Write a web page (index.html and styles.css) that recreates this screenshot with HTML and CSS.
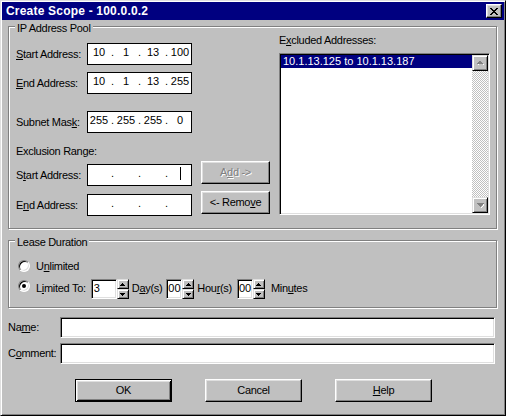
FILE: index.html
```html
<!DOCTYPE html>
<html>
<head>
<meta charset="utf-8">
<title>Create Scope</title>
<link rel="stylesheet" href="styles.css">
</head>
<body>
<div class="window">
  <div class="titlebar">
    <span class="title">Create Scope - 100.0.0.2</span>
    <span class="close"><svg width="8" height="7" viewBox="0 0 8 7" shape-rendering="crispEdges"><path d="M0 0h2v1H0zM6 0h2v1H6zM1 1h2v1H1zM5 1h2v1H5zM2 2h4v1H2zM3 3h2v1H3zM2 4h4v1H2zM1 5h2v1H1zM5 5h2v1H5zM0 6h2v1H0zM6 6h2v1H6z"/></svg></span>
  </div>
  <div class="client">
    <div class="group pool">
      <div class="group-title">IP Address Pool</div>
      <div class="pool-body">
        <div class="pool-left">
          <div class="row r1">
            <span class="lbl"><u>S</u>tart Address:</span>
            <div class="ip"><span class="oct">10</span><span class="dot">.</span><span class="oct">1</span><span class="dot">.</span><span class="oct">13</span><span class="dot">.</span><span class="oct">100</span></div>
          </div>
          <div class="row r2">
            <span class="lbl"><u>E</u>nd Address:</span>
            <div class="ip"><span class="oct">10</span><span class="dot">.</span><span class="oct">1</span><span class="dot">.</span><span class="oct">13</span><span class="dot">.</span><span class="oct">255</span></div>
          </div>
          <div class="row r3">
            <span class="lbl">Subnet Mas<u>k</u>:</span>
            <div class="ip"><span class="oct">255</span><span class="dot">.</span><span class="oct">255</span><span class="dot">.</span><span class="oct">255</span><span class="dot">.</span><span class="oct">0</span></div>
          </div>
          <div class="lbl excl-title">Exclusion Range:</div>
          <div class="excl">
            <span class="lbl">S<u>t</u>art Address:</span>
            <div class="ip"><span class="oct"></span><span class="dot">.</span><span class="oct"></span><span class="dot">.</span><span class="oct"></span><span class="dot">.</span><span class="oct"><span class="caret"></span></span></div>
            <div class="btn small disabled">A<u>d</u>d -&gt;</div>
            <span class="lbl">E<u>n</u>d Address:</span>
            <div class="ip"><span class="oct"></span><span class="dot">.</span><span class="oct"></span><span class="dot">.</span><span class="oct"></span><span class="dot">.</span><span class="oct"></span></div>
            <div class="btn small">&lt;- Remo<u>v</u>e</div>
          </div>
        </div>
        <div class="pool-right">
          <div class="lbl list-title">E<u>x</u>cluded Addresses:</div>
          <div class="list">
            <div class="items">
              <div class="item sel">10.1.13.125 to 10.1.13.187</div>
            </div>
            <div class="sb">
              <div class="sb-btn"><svg width="7" height="5" viewBox="0 0 7 5" shape-rendering="crispEdges"><path fill="#fff" d="M4 1h1v1h1v1h1v1H1V3h1v1h4V3H5V2H4z"/><path fill="#808080" d="M3 0h1v1h1v1h1v1H0V2h1V1h1V0z"/></svg></div>
              <div class="sb-track"></div>
              <div class="sb-btn"><svg width="7" height="5" viewBox="0 0 7 5" shape-rendering="crispEdges"><path fill="#fff" d="M1 1h7v1H7v1H6v1H5v1H4V4h1V3h1V2H1z"/><path fill="#808080" d="M0 0h7v1H6v1H5v1H4v1H3V3H2V2H1V1H0z"/></svg></div>
            </div>
          </div>
        </div>
      </div>
    </div>

    <div class="group lease">
      <div class="group-title">Lease Duration</div>
      <div class="lrow lrow1">
        <span class="radio"></span>
        <span class="lbl rlbl">U<u>n</u>limited</span>
      </div>
      <div class="lrow lrow2">
        <span class="radio on"></span>
        <span class="lbl rlbl lim">L<u>i</u>mited To:</span>
        <span class="spinbox w26">3</span>
        <span class="spin"><span class="spin-btn"><svg width="5" height="3" viewBox="0 0 5 3" shape-rendering="crispEdges"><path d="M2 0h1v1h1v1h1v1H0V2h1V1h1z"/></svg></span><span class="spin-btn"><svg width="5" height="3" viewBox="0 0 5 3" shape-rendering="crispEdges"><path d="M0 0h5v1H4v1H3v1H2V2H1V1H0z"/></svg></span></span>
        <span class="lbl unit u-day">D<u>a</u>y(s)</span>
        <span class="spinbox w16">00</span>
        <span class="spin"><span class="spin-btn"><svg width="5" height="3" viewBox="0 0 5 3" shape-rendering="crispEdges"><path d="M2 0h1v1h1v1h1v1H0V2h1V1h1z"/></svg></span><span class="spin-btn"><svg width="5" height="3" viewBox="0 0 5 3" shape-rendering="crispEdges"><path d="M0 0h5v1H4v1H3v1H2V2H1V1H0z"/></svg></span></span>
        <span class="lbl unit u-hour">Hou<u>r</u>(s)</span>
        <span class="spinbox w16">00</span>
        <span class="spin"><span class="spin-btn"><svg width="5" height="3" viewBox="0 0 5 3" shape-rendering="crispEdges"><path d="M2 0h1v1h1v1h1v1H0V2h1V1h1z"/></svg></span><span class="spin-btn"><svg width="5" height="3" viewBox="0 0 5 3" shape-rendering="crispEdges"><path d="M0 0h5v1H4v1H3v1H2V2H1V1H0z"/></svg></span></span>
        <span class="lbl unit u-min">Min<u>u</u>tes</span>
      </div>
    </div>

    <div class="frow name-row">
      <span class="lbl flbl">Na<u>m</u>e:</span>
      <div class="field"></div>
    </div>
    <div class="frow comment-row">
      <span class="lbl flbl">C<u>o</u>mment:</span>
      <div class="field"></div>
    </div>

    <div class="buttons">
      <div class="btn big default">OK</div>
      <div class="btn big">Cancel</div>
      <div class="btn big"><u>H</u>elp</div>
    </div>
  </div>
</div>
</body>
</html>
```

FILE: styles.css
```css
* { box-sizing: border-box; }
html, body { margin: 0; padding: 0; }
body {
  width: 506px;
  height: 416px;
  overflow: hidden;
  background: #c0c0c0;
  font-family: "Liberation Sans", Arial, sans-serif;
  font-size: 11px;
  color: #000;
}
u { text-decoration-thickness: 1px; text-underline-offset: 1px; }

.window {
  width: 506px;
  height: 416px;
  background: #c0c0c0;
  border: 1px solid;
  border-color: #dfdfdf #000 #000 #dfdfdf;
  box-shadow: inset 1px 1px 0 #fff, inset -1px -1px 0 #808080;
  padding: 1px;
}

.titlebar {
  height: 18px;
  background: #000080;
  color: #fff;
  display: flex;
  align-items: center;
  justify-content: space-between;
  padding: 0 2px 0 4px;
}
.title {
  font-weight: bold;
  font-size: 12px;
  letter-spacing: 0.2px;
  line-height: 18px;
  white-space: nowrap;
}
.close {
  width: 16px;
  height: 14px;
  background: #c0c0c0;
  border: 1px solid;
  border-color: #fff #000 #000 #fff;
  box-shadow: inset -1px -1px 0 #808080, inset 1px 1px 0 #dfdfdf;
  display: flex;
  align-items: center;
  justify-content: center;
  padding-right: 1px;
}
.close svg { display: block; fill: #000; }

.client { padding-left: 6px; }

.group {
  width: 489px;
  border: 1px solid #808080;
  box-shadow: inset 1px 1px 0 #fff, 1px 1px 0 #fff;
}
.group-title {
  width: max-content;
  margin: -5px 0 0 6px;
  padding: 0 2px;
  background: #c0c0c0;
  line-height: 13px;
  letter-spacing: -0.3px;
  white-space: nowrap;
}
.lbl {
  line-height: 13px;
  letter-spacing: -0.3px;
  white-space: nowrap;
}

.pool { margin-top: 6px; height: 203px; }
.pool-body { display: flex; }
.pool-left { width: 270px; padding-left: 7px; }
.pool-right { width: 211px; }

.row { display: flex; align-items: center; height: 22px; }
.row .lbl, .excl > .lbl { width: 71px; }
.r1 { margin-top: 8px; }
.r2 { margin-top: 7px; }
.r3 { margin-top: 17px; }
.excl-title { margin-top: 12px; }

.ip {
  width: 105px;
  height: 22px;
  border: 1px solid #000;
  background: #fff;
  display: flex;
  line-height: 17px;
}
.oct { width: 22px; text-align: center; display: flex; justify-content: center; }
.dot { width: 5px; text-align: center; }
.caret { display: block; width: 1px; height: 13px; background: #000; margin: 2px 0 0 1px; }

.excl {
  margin-top: 6px;
  display: grid;
  grid-template-columns: 71px 105px 78px;
  grid-template-rows: 22px 22px;
  row-gap: 8px;
  align-items: center;
}

.btn {
  background: #c0c0c0;
  border: 1px solid;
  border-color: #fff #000 #000 #fff;
  box-shadow: inset -1px -1px 0 #808080, inset 1px 1px 0 #dfdfdf;
  display: flex;
  align-items: center;
  justify-content: center;
  letter-spacing: -0.3px;
  white-space: nowrap;
  line-height: 13px;
}
.btn.small {
  width: 69px;
  height: 23px;
  margin: -3px 0 0 9px;
  align-self: start;
}
.btn.disabled { color: #808080; text-shadow: 1px 1px 0 #fff; }
.btn.big { width: 97px; height: 23px; }
.btn.default {
  border-color: #000;
  box-shadow: inset 1px 1px 0 #fff, inset -1px -1px 0 #000, inset 2px 2px 0 #dfdfdf, inset -2px -2px 0 #808080;
}

.list-title { margin-top: -1px; }
.list {
  margin-top: 6px;
  width: 211px;
  height: 162px;
  background: #fff;
  border: 1px solid;
  border-color: #808080 #fff #fff #808080;
  box-shadow: inset 1px 1px 0 #000, inset -1px -1px 0 #dfdfdf;
  padding: 1px;
  display: flex;
}
.items { flex: 1; }
.item { height: 13px; line-height: 13px; padding-left: 2px; white-space: nowrap; }
.item.sel { background: #000080; color: #fff; }
.sb {
  width: 16px;
  display: flex;
  flex-direction: column;
  background: repeating-conic-gradient(#c0c0c0 0 25%, #fff 0 50%) 0 0 / 2px 2px;
}
.sb-track { flex: 1; }
.sb-btn {
  width: 16px;
  height: 16px;
  background: #c0c0c0;
  border: 1px solid;
  border-color: #dfdfdf #000 #000 #dfdfdf;
  box-shadow: inset 1px 1px 0 #fff, inset -1px -1px 0 #808080;
  display: flex;
  align-items: center;
  justify-content: center;
}
.sb-btn svg { display: block; }

.lease { margin-top: 11px; height: 68px; }
.lrow { display: flex; margin-left: 9px; }
.lrow1 { margin-top: 11px; height: 12px; align-items: center; }
.lrow2 { margin-top: 7px; height: 20px; align-items: flex-start; }
.radio {
  width: 12px;
  height: 12px;
  border-radius: 50%;
  background: #fff;
  border: 1px solid;
  border-color: #808080 #fff #fff #808080;
  box-shadow: inset 1px 1px 0 #000, inset -1px -1px 0 #dfdfdf;
  display: flex;
  align-items: center;
  justify-content: center;
  flex: none;
}
.radio.on::after {
  content: "";
  width: 4px;
  height: 4px;
  border-radius: 50%;
  background: #000;
}
.lrow2 .radio { margin-top: 1px; }
.rlbl { margin-left: 6px; }
.lrow2 .lbl { margin-top: 3px; }
.lim { margin-right: 5px; }
.spinbox {
  height: 20px;
  background: #fff;
  border: 1px solid;
  border-color: #808080 #fff #fff #808080;
  box-shadow: inset 1px 1px 0 #000, inset -1px -1px 0 #dfdfdf;
  padding: 2px 0 0 2px;
  line-height: 13px;
}
.w26 { width: 26px; }
.w16 { width: 16px; padding-left: 1px; }
.spin { width: 12px; height: 20px; display: flex; flex-direction: column; }
.spin-btn {
  height: 10px;
  background: #c0c0c0;
  border: 1px solid;
  border-color: #dfdfdf #000 #000 #dfdfdf;
  box-shadow: inset 1px 1px 0 #fff, inset -1px -1px 0 #808080;
  display: flex;
  align-items: center;
  justify-content: center;
}
.spin-btn svg { display: block; }
.u-day { margin: 3px 4px 0 3px; }
.u-hour { margin: 3px 5px 0 3px; }
.u-min { margin: 3px 0 0 6px; }

.frow { display: flex; align-items: center; height: 21px; }
.name-row { margin-top: 9px; }
.comment-row { margin-top: 5px; }
.flbl { width: 52px; }
.field {
  width: 435px;
  height: 21px;
  background: #fff;
  border: 1px solid;
  border-color: #808080 #fff #fff #808080;
  box-shadow: inset 1px 1px 0 #000, inset -1px -1px 0 #dfdfdf;
}

.buttons {
  margin-top: 15px;
  padding-left: 67px;
  display: flex;
  gap: 33px;
}
```
